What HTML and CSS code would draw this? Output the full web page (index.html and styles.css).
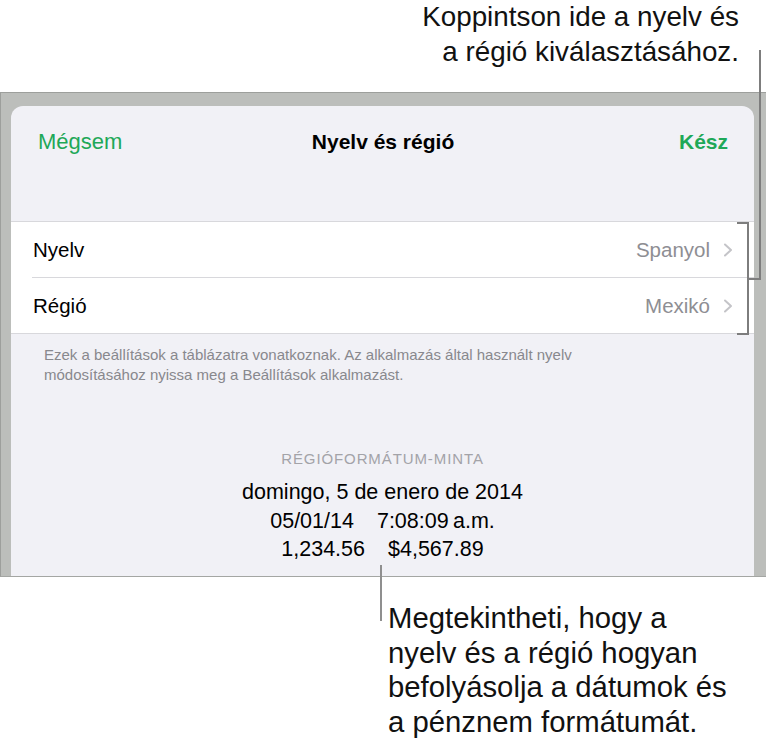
FILE: index.html
```html
<!DOCTYPE html>
<html lang="hu">
<head>
<meta charset="utf-8">
<title>Nyelv és régió</title>
<link rel="stylesheet" href="styles.css">
</head>
<body>
<div class="page">
  <div class="note note-top">Koppintson ide a nyelv és<br>a régió kiválasztásához.</div>

  <div class="frame">
    <div class="sheet">
      <div class="nav">
        <span class="nav-btn nav-cancel">Mégsem</span>
        <span class="nav-title">Nyelv és régió</span>
        <span class="nav-btn nav-done">Kész</span>
      </div>

      <div class="table">
        <div class="row">
          <span class="row-label">Nyelv</span>
          <span class="row-value">Spanyol</span>
          <svg class="chev" width="10" height="14" viewBox="0 0 10 14"><path d="M2 1.5 L8 7 L2 12.5" fill="none" stroke="#c4c4c8" stroke-width="2" stroke-linecap="round" stroke-linejoin="round"/></svg>
        </div>
        <div class="sep"></div>
        <div class="row">
          <span class="row-label">Régió</span>
          <span class="row-value">Mexikó</span>
          <svg class="chev" width="10" height="14" viewBox="0 0 10 14"><path d="M2 1.5 L8 7 L2 12.5" fill="none" stroke="#c4c4c8" stroke-width="2" stroke-linecap="round" stroke-linejoin="round"/></svg>
        </div>
      </div>

      <p class="footer-text">Ezek a beállítások a táblázatra vonatkoznak. Az alkalmazás által használt nyelv<br>módosításához nyissa meg a Beállítások alkalmazást.</p>

      <div class="sample">
        <div class="sample-head">RÉGIÓFORMÁTUM-MINTA</div>
        <div class="sample-line">domingo, 5 de enero de 2014</div>
        <div class="sample-line"><span class="gap">05/01/14</span><span>7:08:09&#8239;a.m.</span></div>
        <div class="sample-line"><span class="gap">1,234.56</span><span>$4,567.89</span></div>
      </div>
    </div>
  </div>

  <div class="note note-bottom">Megtekintheti, hogy a<br>nyelv és a régió hogyan<br>befolyásolja a dátumok és<br>a pénznem formátumát.</div>

  <svg class="callouts" width="766" height="750" viewBox="0 0 766 750">
    <g fill="none" stroke="#7d7d7d" stroke-width="2">
      <path d="M760 50 V279 H748"/>
      <path d="M737 223 H748 V334 H737"/>
      <path d="M381 565 V621" stroke="#8f8f8f"/>
    </g>
  </svg>
</div>
</body>
</html>
```

FILE: styles.css
```css
* { box-sizing: border-box; }
html, body { margin: 0; padding: 0; background: #ffffff; }
body { width: 766px; height: 750px; overflow: hidden; font-family: "Liberation Sans", Arial, sans-serif; color: #000; }
.page { position: relative; width: 766px; height: 750px; }

.note { line-height: 34.5px; color: #111; }
.note-top { height: 92px; font-size: 27.8px; text-align: right; padding-right: 27px; }
.note-bottom { margin-top: 24px; padding-left: 388px; font-size: 29.3px; }

.frame {
  height: 485px;
  background: #bcbebb;
  border-top: 1px solid #9d9f9c;
  border-left: 1px solid #9d9f9c;
  border-bottom: 1px solid #a4a6a3;
  padding: 13px 12px 0 10px;
  display: flex;
}
.sheet {
  flex: 1;
  background: #f1f1f6;
  border-radius: 12px 12px 0 0;
  display: flex;
  flex-direction: column;
}

.nav { height: 72px; display: grid; grid-template-columns: 1fr auto 1fr; align-items: center; padding: 0 26px 0 27px; font-size: 21px; }
.nav-btn { color: #1ea858; }
.nav-cancel { font-size: 22px; justify-self: start; }
.nav-done { font-weight: bold; justify-self: end; }
.nav-title { font-weight: bold; }

.table { margin-top: 43px; background: #fff; border-top: 1px solid #d8d8dc; border-bottom: 1px solid #d8d8dc; }
.row { height: 55px; display: flex; align-items: center; padding: 0 21px 0 22px; font-size: 20.5px; }
.row-label { flex: 1; }
.row-value { color: #8e8e93; margin-right: 13px; }
.chev { display: block; }
.sep { height: 1px; background: #d8d8dc; margin-left: 21px; }

.footer-text { margin: 11px 0 0 0; padding-left: 33px; font-size: 15px; line-height: 20px; color: #88888d; }

.sample { margin-top: 64px; text-align: center; }
.sample-head { font-size: 15px; letter-spacing: 0.9px; line-height: 20px; color: #a3a3a8; margin-bottom: 9px; }
.sample-line { font-size: 21.5px; line-height: 28.5px; color: #000; }
.gap { margin-right: 23px; }

.callouts { position: absolute; left: 0; top: 0; pointer-events: none; }
```
